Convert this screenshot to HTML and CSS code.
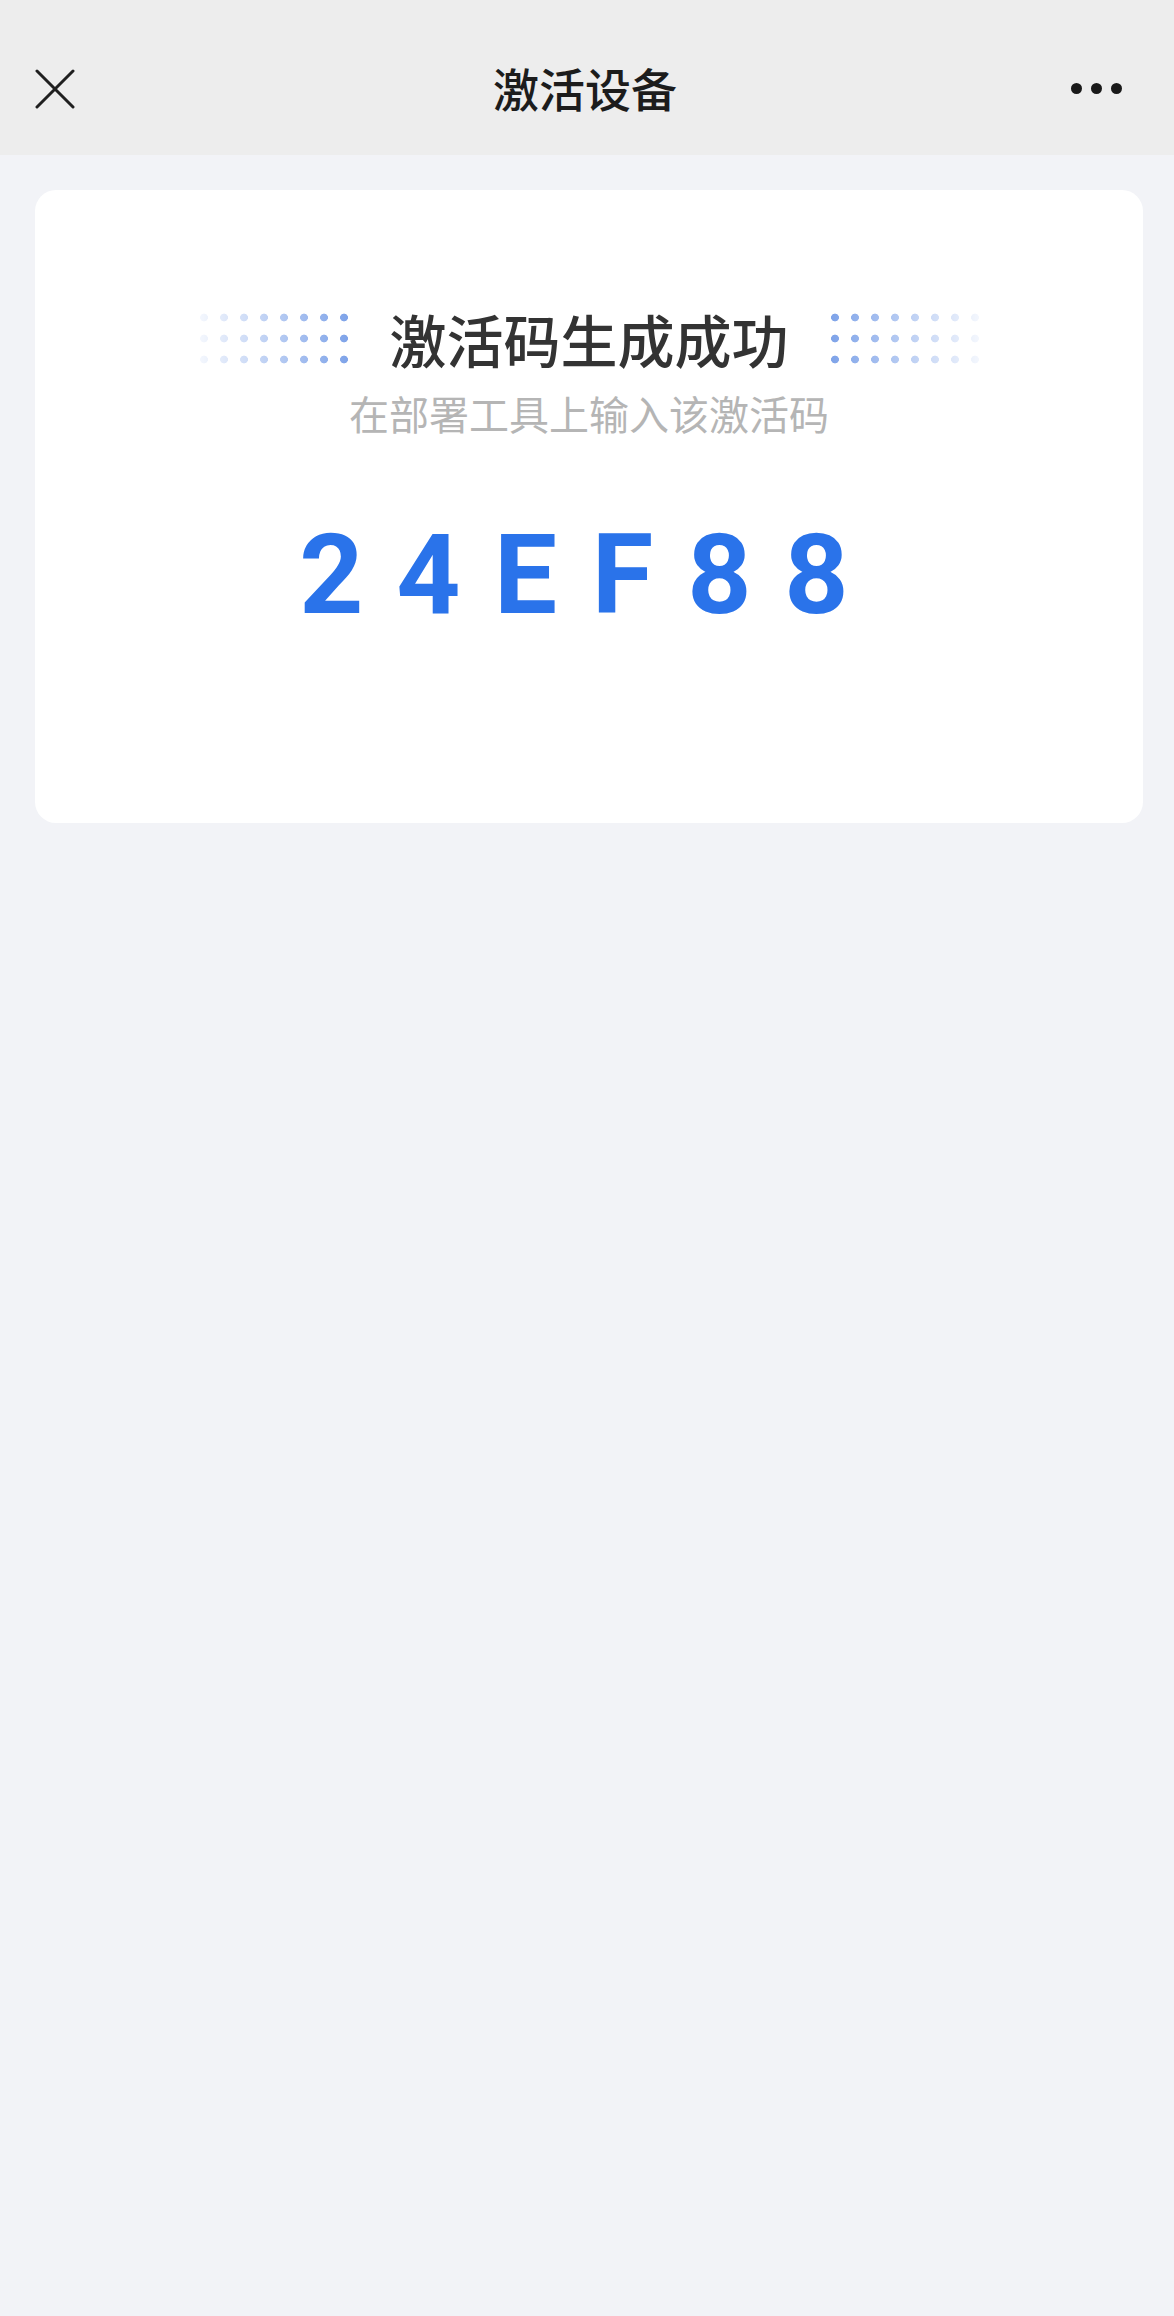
FILE: index.html
```html
<!DOCTYPE html>
<html lang="zh-CN">

<head>
  <meta charset="UTF-8">
  <meta name="viewport" content="width=device-width, initial-scale=1.0">
  <title>激活设备</title>

  <link rel="stylesheet" href="styles.css">
</head>

<body>
  <header class="nav-bar">
    <button class="nav-btn close-btn" aria-label="关闭">
      <svg width="40" height="40" viewBox="0 0 40 40">
        <path d="M2 2 L38 38 M38 2 L2 38" stroke="#1f1f1f" stroke-width="3" stroke-linecap="round" fill="none" />
      </svg>
    </button>
    <h1 class="nav-title">激活设备</h1>
    <button class="nav-btn more-btn" aria-label="更多">
      <span class="dot"></span>
      <span class="dot"></span>
      <span class="dot"></span>
    </button>
  </header>

  <main>
    <section class="card">
      <div class="heading">
        <span class="dots dots-left"></span>
        <h2 class="heading-text">激活码生成成功</h2>
        <span class="dots dots-right"></span>
      </div>
      <p class="hint">在部署工具上输入该激活码</p>
      <div class="code">
        <span>2</span>
        <span>4</span>
        <span>E</span>
        <span>F</span>
        <span>8</span>
        <span>8</span>
      </div>
    </section>
  </main>
</body>

</html>
```

FILE: styles.css
```css
* {
  box-sizing: border-box;
}

body {
  margin: 0;
  min-height: 2316px;
  background: #f2f3f7;
  font-family: "Noto Sans CJK SC", "Noto Sans", sans-serif;
}

.nav-bar {
  align-items: center;
  background: #ededed;
  display: flex;
  height: 155px;
  justify-content: space-between;
  padding: 22px 52px 0 35px;
}

.nav-btn {
  background: none;
  border: 0;
  padding: 0;
  cursor: pointer;
}

.close-btn {
  display: flex;
  height: 40px;
  width: 40px;
}

.nav-title {
  color: #1c1c1c;
  font-size: 46px;
  font-weight: 500;
  line-height: 60px;
  margin: -4px 0 0 24px;
}

.more-btn {
  column-gap: 9px;
  display: flex;
}

.dot {
  background: #1a1a1a;
  border-radius: 50%;
  height: 11px;
  width: 11px;
}

main {
  padding: 35px 31px 0 35px;
}

.card {
  background: #fff;
  border-radius: 21px;
  height: 633px;
  padding-top: 108px;
}

.heading {
  align-items: center;
  column-gap: 36px;
  display: flex;
  justify-content: center;
}

.heading-text {
  color: #333;
  font-size: 57px;
  font-weight: 500;
  line-height: 80px;
  margin: 0;
}

.dots {
  background: radial-gradient(circle, #7aa0e8 3.6px, transparent 4.2px) 0 0 / 20px 21px;
  height: 63px;
  width: 160px;
}

.dots-left {
  -webkit-mask-image: linear-gradient(to right, rgba(0, 0, 0, 0.05), #000);
  mask-image: linear-gradient(to right, rgba(0, 0, 0, 0.05), #000);
}

.dots-right {
  -webkit-mask-image: linear-gradient(to left, rgba(0, 0, 0, 0.05), #000);
  mask-image: linear-gradient(to left, rgba(0, 0, 0, 0.05), #000);
}

.hint {
  color: #b5b5b5;
  font-size: 40px;
  line-height: 56px;
  margin: 7px 0 0;
  text-align: center;
}

.code {
  color: #2a73ea;
  display: flex;
  font-family: Roboto, "Liberation Sans", sans-serif;
  font-size: 112px;
  font-weight: 700;
  justify-content: center;
  line-height: 112px;
  margin-top: 78px;
  padding-right: 30px;
}

.code span {
  text-align: center;
  width: 97px;
}
```
